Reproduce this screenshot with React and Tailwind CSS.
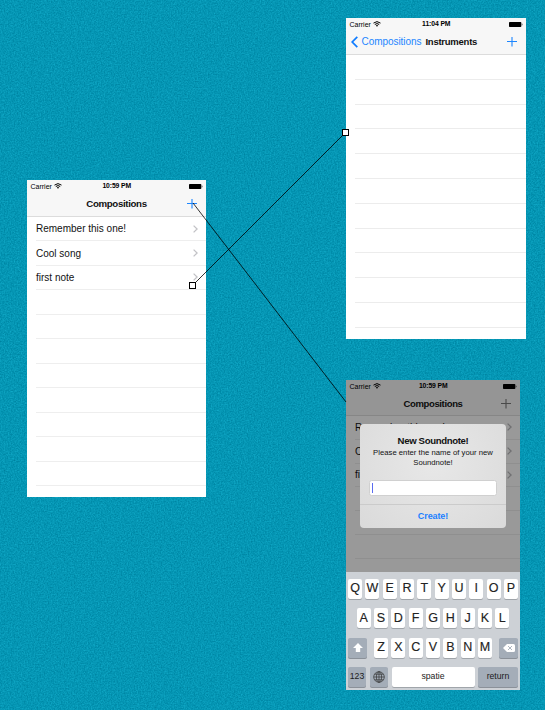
import React from "react";

const Wifi = () => (
  <svg className="ml-[2.5px] h-[6px] w-[8px]" viewBox="0 0 16 12" fill="none" stroke="currentColor" strokeWidth="2">
    <path d="M1 4.2Q8-1.8 15 4.2" />
    <path d="M3.6 7Q8 3.2 12.4 7" />
    <path d="M8 11.5L5.6 8.8Q8 7 10.4 8.8Z" fill="currentColor" stroke="none" />
  </svg>
);

const Battery = () => (
  <svg className="h-[5px] w-[14px]" viewBox="0 0 14 5">
    <rect width="12.3" height="5" rx="0.7" fill="currentColor" />
    <path d="M12.8 1.5h.3q.7 1 0 2h-.3z" fill="currentColor" />
  </svg>
);

const Plus = ({ className }) => (
  <svg className={`h-[10px] w-[10px] ${className}`} viewBox="0 0 10 10" stroke="currentColor" strokeWidth="1.1">
    <path d="M5 0v9.5M0 4.5h10" />
  </svg>
);

const Chevron = ({ className }) => (
  <svg className={`h-[8px] w-[5px] ${className}`} viewBox="0 0 5 8" fill="none" stroke="currentColor" strokeWidth="1.3">
    <path d="M.6.6L4.1 4 .6 7.4" />
  </svg>
);

function StatusBar({ time }) {
  return (
    <div className="grid h-[12px] grid-cols-3 items-center pl-[3.5px] pr-[3px] text-[7px] leading-none text-black">
      <span className="flex items-center">Carrier<Wifi /></span>
      <span className="text-center text-[6.8px] font-semibold tracking-[-0.1px]">{time}</span>
      <span className="flex justify-end"><Battery /></span>
    </div>
  );
}

function EmptyRows({ count, className }) {
  return Array.from({ length: count }, (_, i) => (
    <div key={i} className={`shrink-0 border-b ${className}`} />
  ));
}

const songs = ["Remember this one!", "Cool song", "first note"];

function Compositions() {
  return (
    <section className="absolute left-[27px] top-[180px] flex h-[317px] w-[179px] flex-col overflow-hidden bg-white">
      <header className="h-[37px] shrink-0 border-b border-[#dcdcdc] bg-[#f7f7f7]">
        <StatusBar time="10:59 PM" />
        <div className="grid h-[24px] grid-cols-[1fr_auto_1fr] items-center px-[9px]">
          <span />
          <h1 className="text-[9.7px] font-bold leading-none tracking-[-0.35px] text-[#111]">Compositions</h1>
          <Plus className="justify-self-end text-[#1c86ff]" />
        </div>
      </header>
      {songs.map((s) => (
        <div key={s} className="ml-[9px] flex h-[24.4px] shrink-0 items-center justify-between border-b border-[#eeeeee] pr-[8px] text-[10px] text-[#111]">
          <span>{s}</span>
          <Chevron className="text-[#c2c2c6]" />
        </div>
      ))}
      <EmptyRows count={8} className="ml-[9px] h-[24.5px] border-[#eeeeee]" />
    </section>
  );
}

function Instruments() {
  return (
    <section className="absolute left-[346px] top-[18px] flex h-[321px] w-[180px] flex-col overflow-hidden bg-white">
      <header className="h-[37px] shrink-0 border-b border-[#dcdcdc] bg-[#f7f7f7]">
        <StatusBar time="11:04 PM" />
        <div className="flex h-[24px] items-center pl-[5px] pr-[9px]">
          <svg className="h-[12px] w-[7px] text-[#0f7cff]" viewBox="0 0 7 12" fill="none" stroke="currentColor" strokeWidth="1.7">
            <path d="M6.3.8L1.2 6l5.1 5.2" />
          </svg>
          <span className="ml-[3.5px] text-[10px] leading-none tracking-[-0.05px] text-[#1c86ff]">Compositions</span>
          <h1 className="ml-[4px] text-[9.5px] font-bold leading-none tracking-[-0.25px] text-[#111]">Instruments</h1>
          <Plus className="ml-auto text-[#1c86ff]" />
        </div>
      </header>
      <EmptyRows count={11} className="ml-[9px] h-[24.8px] border-[#ececec]" />
    </section>
  );
}

const Key = ({ children }) => (
  <span className="flex h-[20px] w-[14px] items-center justify-center rounded-[2px] bg-white text-[12.5px] leading-none text-[#222] [-webkit-text-stroke:0.15px_#222] shadow-[0_1px_0_#a0a5aa]">
    {children}
  </span>
);

const darkKey = "flex h-[20px] items-center justify-center rounded-[2px] bg-[#a4adb8] shadow-[0_1px_0_#8b9199]";

function Keyboard() {
  return (
    <div className="flex h-[118px] flex-col gap-[9.5px] bg-[#cdd1d6] px-[2px] pt-[6.5px] text-[8.7px] text-[#1c1c1c]">
      <div className="flex justify-between">{[..."QWERTYUIOP"].map((k) => <Key key={k}>{k}</Key>)}</div>
      <div className="flex justify-between px-[8.7px]">{[..."ASDFGHJKL"].map((k) => <Key key={k}>{k}</Key>)}</div>
      <div className="flex justify-between">
        <span className={`${darkKey} w-[19px]`}>
          <svg className="h-[9px] w-[10px]" viewBox="0 0 10 9" fill="white"><path d="M5 0L10 5H7.2V9H2.8V5H0z" /></svg>
        </span>
        <span className="flex w-[118px] justify-between">{[..."ZXCVBNM"].map((k) => <Key key={k}>{k}</Key>)}</span>
        <span className={`${darkKey} w-[19px]`}>
          <svg className="h-[8px] w-[12px]" viewBox="0 0 12 8">
            <path d="M4 0h6.5Q12 0 12 1.5v5Q12 8 10.5 8H4L0 4z" fill="white" />
            <path d="M5 2l4 4M9 2L5 6" stroke="#a4adb8" strokeWidth=".9" />
          </svg>
        </span>
      </div>
      <div className="flex">
        <span className={`${darkKey} w-[18px]`}>123</span>
        <span className={`${darkKey} ml-[4px] w-[18px]`}>
          <svg className="h-[12px] w-[12px]" viewBox="0 0 12 12" fill="none" stroke="#333" strokeWidth=".7">
            <circle cx="6" cy="6" r="5.3" />
            <ellipse cx="6" cy="6" rx="2.6" ry="5.3" />
            <path d="M6 .7v10.6M.7 6h10.6M1.6 3.2h8.8M1.6 8.8h8.8" />
          </svg>
        </span>
        <span className="ml-[3.5px] flex h-[20px] w-[83px] items-center justify-center rounded-[2px] bg-white shadow-[0_1px_0_#a0a5aa]">spatie</span>
        <span className={`${darkKey} ml-[3.5px] w-[40px]`}>return</span>
      </div>
    </div>
  );
}

function NewSoundnote() {
  return (
    <section className="absolute left-[346px] top-[380px] flex h-[310px] w-[174px] flex-col overflow-hidden bg-[#999]">
      <header className="h-[36px] shrink-0 border-b border-[#868686] bg-[#959595]">
        <StatusBar time="10:59 PM" />
        <div className="grid h-[23px] grid-cols-[1fr_auto_1fr] items-center px-[9px]">
          <span />
          <h1 className="text-[9.5px] font-bold leading-none tracking-[-0.35px] text-[#0c0c0c]">Compositions</h1>
          <Plus className="justify-self-end text-[#4a4a4a]" />
        </div>
      </header>
      <div className="h-[156px] shrink-0 overflow-hidden">
        {songs.map((s) => (
          <div key={s} className="ml-[9px] flex h-[23.8px] items-center justify-between border-b border-[#8f8f8f] pr-[8px] text-[10px] text-[#0c0c0c]">
            <span>{s}</span>
            <Chevron className="text-[#707072]" />
          </div>
        ))}
        <EmptyRows count={3} className="ml-[9px] h-[23.8px] border-[#8f8f8f]" />
      </div>
      <Keyboard />
      <div className="absolute left-[14px] top-[44px] flex h-[104px] w-[146px] flex-col rounded-[4px] bg-[radial-gradient(circle_at_50%_35%,#e8e8e8,#dadada)] text-center text-[#111]">
        <h2 className="pt-[11px] text-[9.6px] font-bold leading-[11px] tracking-[-0.35px]">New Soundnote!</h2>
        <p className="mt-[2px] text-[7.7px] leading-[10px] tracking-[0.02px]">Please enter the name of your new<br />Soundnote!</p>
        <div className="mx-[9px] mt-[12px] flex h-[16px] items-center rounded-[2.5px] border border-[#d0d0d0] bg-white pl-[2px]">
          <span className="h-[10px] w-[1px] bg-[#5a6cf0]" />
        </div>
        <div className="mt-auto flex h-[24px] items-center justify-center border-t border-[#cbcbcb] text-[9px] font-bold tracking-[-0.1px] text-[#1c80ff]">Create!</div>
      </div>
    </section>
  );
}

export default function App() {
  return (
    <main className="relative h-[710px] w-[545px] overflow-hidden bg-[#0596b4] font-['Liberation_Sans',Arial,sans-serif]">
      <svg className="absolute inset-0 h-full w-full">
        <filter id="grain" x="0" y="0" width="100%" height="100%" colorInterpolationFilters="sRGB">
          <feTurbulence type="fractalNoise" baseFrequency="0.7" numOctaves="2" seed="4" />
          <feColorMatrix values="0.12 0 0 0 -0.04  0.2 0 0 0 0.488  0.2 0 0 0 0.606  0 0 0 0 1" />
        </filter>
        <rect width="545" height="710" filter="url(#grain)" />
      </svg>
      <Compositions />
      <Instruments />
      <NewSoundnote />
      <svg className="absolute inset-0 h-full w-full" viewBox="0 0 545 710" stroke="#000" fill="none">
        <path d="M193 203L346 402M193 285L345 133" strokeWidth="0.8" />
        <rect x="189.5" y="282.5" width="6" height="6" fill="white" />
        <rect x="342.5" y="129.5" width="6" height="6" fill="white" />
      </svg>
    </main>
  );
}
